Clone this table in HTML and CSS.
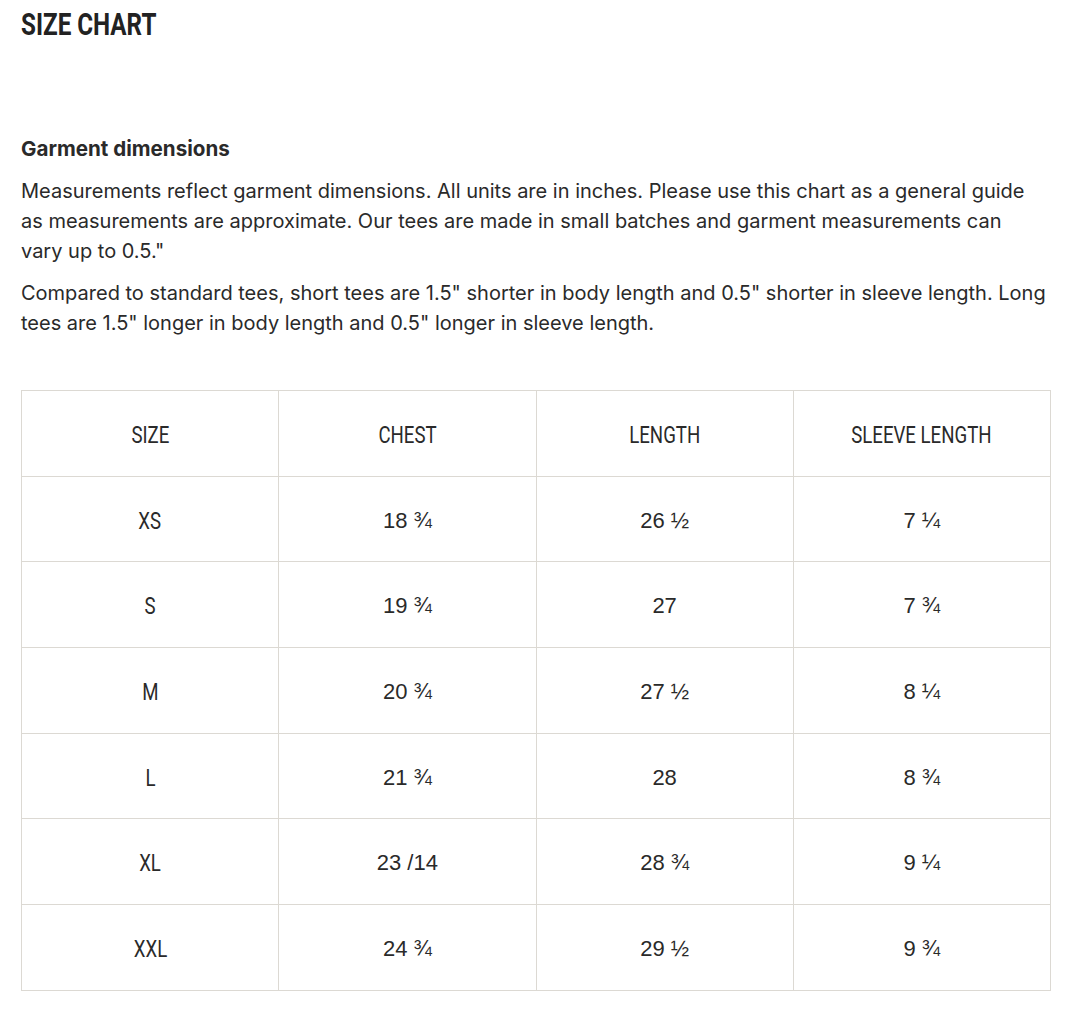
FILE: index.html
```html
<!DOCTYPE html>
<html>
<head>
<meta charset="utf-8">
<link rel="stylesheet" href="styles.css">
</head>
<body>
<main class="page">
  <h1 class="title"><span class="cond-left">SIZE CHART</span></h1>
  <section class="intro">
    <h2 class="subhead">Garment dimensions</h2>
    <p class="text">Measurements reflect garment dimensions. All units are in inches. Please use this chart as a general guide as measurements are approximate. Our tees are made in small batches and garment measurements can vary up to 0.5."</p>
    <p class="text">Compared to standard tees, short tees are 1.5" shorter in body length and 0.5" shorter in sleeve length. Long tees are 1.5" longer in body length and 0.5" longer in sleeve length.</p>
  </section>
  <table class="chart">
    <thead>
      <tr><th><span class="cond">SIZE</span></th><th><span class="cond">CHEST</span></th><th><span class="cond">LENGTH</span></th><th><span class="cond">SLEEVE LENGTH</span></th></tr>
    </thead>
    <tbody>
      <tr><td><span class="cond">XS</span></td><td>18 ¾</td><td>26 ½</td><td>7 ¼</td></tr>
      <tr><td><span class="cond">S</span></td><td>19 ¾</td><td>27</td><td>7 ¾</td></tr>
      <tr><td><span class="cond">M</span></td><td>20 ¾</td><td>27 ½</td><td>8 ¼</td></tr>
      <tr><td><span class="cond">L</span></td><td>21 ¾</td><td>28</td><td>8 ¾</td></tr>
      <tr><td><span class="cond">XL</span></td><td>23 /14</td><td>28 ¾</td><td>9 ¼</td></tr>
      <tr><td><span class="cond">XXL</span></td><td>24 ¾</td><td>29 ½</td><td>9 ¾</td></tr>
    </tbody>
  </table>
</main>
</body>
</html>
```
FILE: styles.css
```css
html, body {
  margin: 0;
  padding: 0;
  background: #ffffff;
}
.page {
  width: 1030px;
  padding: 0 0 0 21px;
  color: #2a2a2a;
  font-family: Inter, "Noto Sans", sans-serif;
}
.title {
  margin: 0;
  padding-top: 7px;
  font-family: Roboto, "Liberation Sans", sans-serif;
  font-weight: 700;
  font-size: 31px;
  line-height: 36px;
  color: #222222;
}
.cond-left {
  display: inline-block;
  transform: scaleX(0.78);
  transform-origin: left center;
}
.intro {
  margin-top: 92px;
  width: 1026px;
}
.subhead {
  margin: 0 0 13px 0;
  font-size: 20.6px;
  font-weight: 700;
  line-height: 28px;
}
.text {
  margin: 0 0 12px 0;
  font-size: 20px;
  line-height: 30px;
  font-weight: 400;
}
.chart {
  margin-top: 52px;
  width: 1030px;
  border-collapse: collapse;
  table-layout: fixed;
}
.chart th, .chart td {
  border: 1px solid #dcd9d3;
  height: 81.7px;
  padding: 3px 0 0 0;
  text-align: center;
  vertical-align: middle;
  font-family: "Liberation Sans", Arial, sans-serif;
  font-size: 22px;
  font-weight: 400;
  color: #2a2a2a;
}
.cond {
  display: inline-block;
  font-family: Roboto, "Liberation Sans", sans-serif;
  font-size: 24px;
  font-weight: 400;
  transform: scaleX(0.776);
  transform-origin: center center;
  color: #2a2a2a;
}
```
